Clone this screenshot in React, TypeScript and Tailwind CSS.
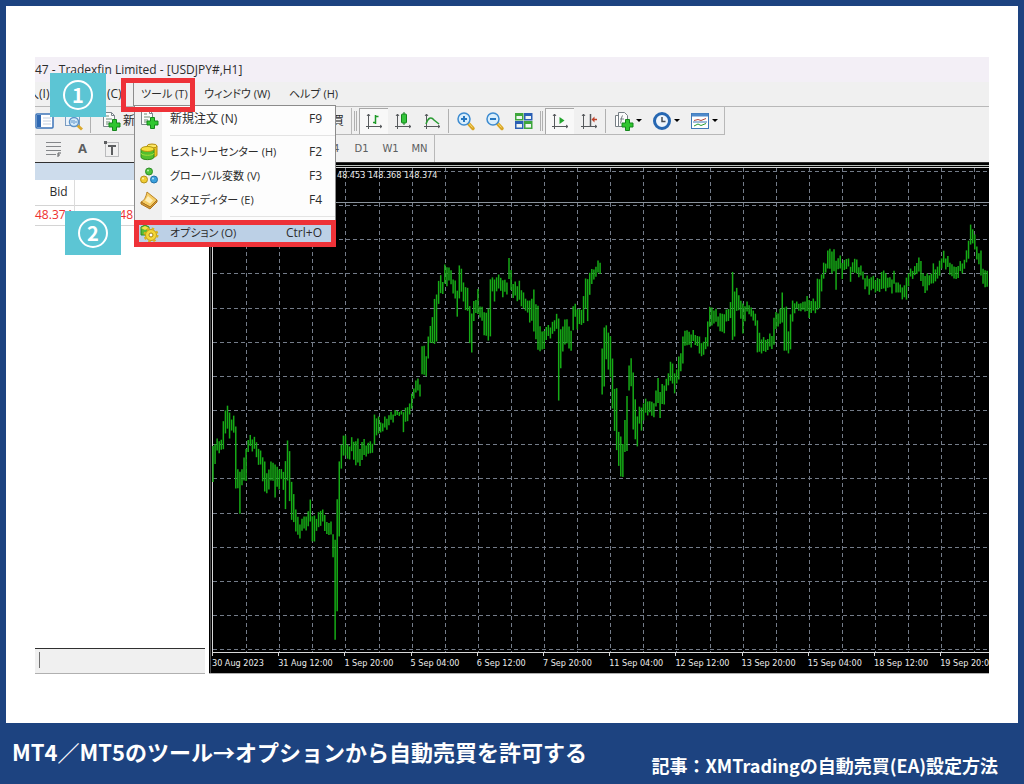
import React from 'react';

// ─────────────────────────────────────────────────────────────
// 1. DATA
// ─────────────────────────────────────────────────────────────

// [x, high, low] for every bar that shapes the curve
const PRICES: number[][] = [
  [213, 446, 482], [215, 443, 463], [218, 440, 452], [222, 440, 450], [224, 422, 450], [226, 409, 432], [228, 407, 430],
  [230, 412, 438], [232, 419, 430], [234, 417, 434], [236, 425, 487], [238, 470, 489], [239, 472, 514], [241, 474, 508],
  [242, 468, 484], [244, 459, 482], [246, 448, 480], [247, 442, 465], [249, 440, 452], [251, 436, 447], [253, 438, 450],
  [256, 442, 457], [258, 448, 464], [260, 452, 466], [262, 456, 480], [264, 462, 492], [266, 474, 494], [268, 468, 488],
  [271, 463, 482], [273, 462, 480], [276, 464, 497], [278, 468, 488], [281, 470, 480], [284, 472, 490], [285, 460, 508],
  [287, 442, 482], [289, 450, 500], [291, 482, 520], [293, 495, 523], [295, 508, 530], [297, 518, 536], [299, 524, 538],
  [301, 522, 534], [303, 518, 530], [306, 515, 529], [309, 512, 527], [311, 500, 522], [312, 515, 540], [313, 520, 553],
  [315, 517, 543], [317, 518, 530], [320, 512, 527], [322, 508, 520], [325, 516, 532], [328, 522, 534], [330, 523, 536],
  [332, 527, 550], [334, 533, 556], [336, 540, 640], [337, 500, 612], [339, 460, 535], [341, 446, 470], [342, 442, 466],
  [344, 435, 455], [347, 446, 460], [349, 445, 458], [352, 438, 452], [354, 442, 460], [357, 440, 464], [359, 448, 465],
  [361, 442, 460], [364, 440, 456], [367, 444, 455], [370, 441, 453], [373, 443, 452], [375, 416, 446], [378, 417, 434],
  [380, 423, 433], [383, 422, 430], [386, 418, 429], [389, 415, 425], [392, 413, 421], [395, 411, 417], [399, 411, 415],
  [402, 412, 416], [404, 411, 431], [407, 408, 422], [409, 402, 413], [412, 395, 410], [414, 388, 398], [417, 380, 392],
  [419, 383, 395], [421, 364, 390], [423, 347, 375], [425, 346, 375], [427, 355, 375], [428, 338, 360], [431, 325, 342],
  [433, 317, 343], [435, 300, 345], [437, 293, 340], [438, 282, 305], [440, 275, 293], [443, 281, 293], [446, 266, 285],
  [448, 268, 281], [451, 271, 285], [454, 278, 292], [456, 282, 300], [458, 290, 316], [460, 265, 298], [462, 270, 293],
  [464, 281, 300], [467, 288, 311], [469, 305, 342], [471, 315, 354], [473, 315, 350], [474, 300, 320], [477, 300, 313],
  [478, 290, 315], [481, 305, 316], [483, 308, 322], [485, 312, 335], [488, 310, 342], [489, 278, 335], [492, 278, 292],
  [494, 280, 302], [498, 276, 290], [500, 277, 290], [503, 280, 297], [506, 281, 293], [508, 272, 285], [510, 259, 280],
  [512, 270, 290], [514, 283, 297], [517, 285, 300], [520, 281, 300], [522, 291, 307], [525, 300, 312], [528, 300, 312],
  [531, 300, 322], [533, 288, 330], [535, 305, 340], [538, 306, 350], [540, 325, 350], [542, 333, 351], [544, 330, 348],
  [547, 327, 340], [549, 326, 337], [552, 323, 335], [554, 320, 331], [557, 313, 328], [559, 320, 402], [560, 328, 367],
  [562, 327, 352], [564, 320, 345], [566, 318, 342], [568, 325, 340], [570, 328, 350], [572, 330, 350], [573, 306, 330],
  [576, 305, 318], [578, 308, 328], [580, 310, 325], [583, 295, 322], [585, 280, 310], [588, 278, 320], [590, 273, 295],
  [592, 270, 285], [595, 268, 278], [598, 260, 272], [599, 259, 270], [601, 262, 273], [603, 350, 396], [604, 326, 385],
  [606, 326, 360], [608, 333, 370], [610, 335, 376], [612, 345, 385], [613, 360, 410], [615, 388, 430], [617, 388, 450],
  [619, 433, 467], [621, 435, 475], [623, 445, 478], [625, 420, 452], [627, 395, 450], [628, 380, 400], [630, 367, 392],
  [632, 357, 385], [633, 373, 430], [635, 400, 440], [637, 415, 445], [639, 408, 425], [642, 407, 430], [644, 403, 420],
  [647, 400, 414], [650, 402, 413], [653, 402, 416], [656, 392, 408], [658, 377, 402], [660, 392, 418], [662, 385, 405],
  [664, 384, 403], [667, 380, 392], [669, 373, 385], [671, 361, 380], [673, 365, 385], [675, 372, 392], [677, 370, 384],
  [679, 357, 380], [681, 352, 370], [683, 338, 365], [685, 330, 345], [687, 330, 345], [690, 333, 346], [693, 331, 342],
  [696, 335, 345], [699, 338, 355], [703, 342, 355], [706, 338, 350], [708, 320, 345], [710, 308, 328], [712, 307, 325],
  [715, 310, 323], [718, 315, 325], [721, 314, 332], [724, 313, 332], [727, 311, 323], [729, 308, 320], [731, 302, 318],
  [733, 273, 341], [734, 290, 335], [736, 289, 312], [738, 295, 310], [741, 300, 318], [743, 305, 335], [745, 305, 320],
  [747, 302, 312], [750, 306, 315], [753, 312, 322], [756, 313, 325], [758, 320, 352], [760, 334, 353], [763, 338, 352],
  [765, 340, 352], [768, 338, 349], [771, 335, 348], [773, 318, 345], [775, 313, 330], [778, 312, 325], [780, 310, 325],
  [782, 292, 322], [784, 307, 350], [786, 308, 352], [789, 330, 352], [791, 315, 350], [793, 301, 322], [795, 302, 312],
  [798, 303, 310], [801, 303, 311], [805, 300, 310], [807, 297, 312], [809, 300, 318], [812, 300, 312], [815, 300, 312],
  [817, 279, 310], [819, 280, 309], [821, 273, 290], [823, 264, 280], [825, 263, 272], [828, 250, 268], [830, 250, 270],
  [833, 250, 272], [834, 250, 272], [836, 261, 290], [838, 257, 268], [841, 257, 270], [843, 262, 278], [845, 260, 270],
  [848, 257, 265], [851, 268, 283], [853, 262, 272], [855, 258, 272], [857, 261, 275], [860, 266, 276], [863, 272, 280],
  [867, 277, 288], [869, 278, 294], [872, 277, 290], [875, 279, 291], [878, 279, 292], [882, 271, 288], [885, 272, 290],
  [888, 278, 288], [892, 278, 292], [895, 272, 285], [897, 282, 292], [900, 286, 294], [903, 286, 298], [906, 278, 300],
  [908, 272, 285], [911, 270, 278], [915, 266, 275], [917, 264, 275], [919, 256, 270], [921, 262, 282], [923, 273, 286],
  [927, 275, 292], [930, 274, 284], [933, 264, 284], [936, 268, 280], [939, 260, 275], [941, 258, 268], [944, 252, 264],
  [947, 257, 268], [950, 263, 275], [954, 268, 280], [957, 266, 278], [961, 262, 272], [964, 261, 270], [967, 250, 262],
  [969, 240, 258], [971, 226, 246], [973, 228, 242], [975, 235, 250], [977, 247, 260], [979, 252, 263], [982, 252, 277],
  [984, 268, 283], [986, 270, 287], [988, 272, 288],
];

const BAR_STEP = 2.07;
const LEFT = 212.5;
const AXIS_Y = 652.5;

const bars = Array.from({ length: 375 }, (_, i) => {
  const x = 213 + i * BAR_STEP;
  const near = PRICES.reduce((a, b) => (Math.abs(b[0] - x) < Math.abs(a[0] - x) ? b : a));
  const wobble = Math.sin(i * 2.4) * 1.5;
  return { x, high: near[1] + wobble, low: near[2] + wobble };
});

const DATES = [
  '30 Aug 2023', '31 Aug 12:00', '1 Sep 20:00', '5 Sep 04:00', '6 Sep 12:00', '7 Sep 20:00',
  '11 Sep 04:00', '12 Sep 12:00', '13 Sep 20:00', '15 Sep 04:00', '18 Sep 12:00', '19 Sep 20:00',
];

// ─────────────────────────────────────────────────────────────
// 2. ICONS
// ─────────────────────────────────────────────────────────────
const Svg = ({ children, size = 20 }: { children: React.ReactNode; size?: number }) => (
  <svg width={size} height={size} viewBox="0 0 20 20" fill="none" aria-hidden="true" className="shrink-0">
    {children}
  </svg>
);

const Plus = () => (
  <path d="M11.5 8.5h4v3.500h3.500v4h-3.500v3.500h-4v-3.500h-3.500v-4h3.500z" fill="#2fc62f" stroke="#15861c" />
);

const NewOrderIcon = ({ size = 20 }: { size?: number }) => (
  <Svg size={size}>
    <path d="M2.500 1.500h8l3 3v11h-11z" fill="#fbfbfb" stroke="#7c858c" />
    <path d="M10.500 1.500v3h3" stroke="#7c858c" />
    <path d="M5 5h3M5 8h6M5 11h4M5 13h3" stroke="#6f8b76" />
    <Plus />
  </Svg>
);

const PanelIcon = () => (
  <Svg>
    <rect x="1" y="3" width="17" height="14" rx="1" fill="#fff" stroke="#3c74b8" strokeWidth="1.500" />
    <rect x="2" y="4" width="4" height="12" fill="#2f69b3" />
    <path d="M8 7h8M8 10h8M8 13h8" stroke="#c3cfdf" />
  </Svg>
);

const TesterIcon = () => (
  <Svg>
    <rect x="1.500" y="2.500" width="14" height="12" fill="#eaf2fa" stroke="#7a9cc2" />
    <path d="M2 4h13" stroke="#7a9cc2" strokeWidth="2" />
    <path d="M13 14l5 4.500" stroke="#dba92e" strokeWidth="3" />
    <circle cx="10" cy="11" r="4.500" fill="#d6ebfa" stroke="#5d93c8" strokeWidth="1.500" />
    <path d="M8 12v-3M10 13v-4M12 12v-2" stroke="#5d93c8" />
  </Svg>
);

const Axes = () => (
  <path d="M4.500 3v15M2 15.500h16M3 5l1.500-2L6 5M16 14l2 1.500-2 1.500" stroke="#56595c" />
);

const BarChartIcon = () => (
  <Svg>
    <Axes />
    <path d="M11.500 4v9M9 11.500h2.500M11.500 5.500h3" stroke="#1d9a27" strokeWidth="1.500" />
  </Svg>
);

const CandleIcon = () => (
  <Svg>
    <Axes />
    <path d="M11 1v13" stroke="#137a1d" />
    <rect x="8.500" y="3" width="5" height="9" rx="1" fill="#35c43b" stroke="#13861d" />
  </Svg>
);

const LineChartIcon = () => (
  <Svg>
    <Axes />
    <path d="M4 13c2-6 5-8 8-4l5 4" stroke="#2a9c33" strokeWidth="1.500" />
  </Svg>
);

const ZoomIcon = ({ plus }: { plus?: boolean }) => (
  <Svg>
    <path d="M12 12l5 5.500" stroke="#d9a524" strokeWidth="3.500" strokeLinecap="round" />
    <path d="M12.500 12l4 4.500" stroke="#f6dc77" />
    <circle cx="8" cy="8" r="6" fill="#d9eefc" stroke="#3d8bd0" strokeWidth="1.500" />
    <path d={plus ? 'M5 8h6M8 5v6' : 'M5 8h6'} stroke="#2676c0" strokeWidth="2" />
  </Svg>
);

const TileIcon = () => (
  <Svg>
    <rect x="1" y="2" width="8.500" height="7.500" fill="#3ea63c" />
    <rect x="10" y="2" width="8.500" height="7.500" fill="#2a5fb4" />
    <rect x="1" y="10" width="8.500" height="8" fill="#2a5fb4" />
    <rect x="10" y="10" width="8.500" height="8" fill="#3ea63c" />
    <path d="M2.500 5h5.500v3H2.500zM11.500 5H17v3h-5.500zM2.500 13h5.500v3.500H2.500zM11.500 13H17v3.500h-5.500z" fill="#eff5f2" />
  </Svg>
);

const ScrollIcon = () => (
  <Svg>
    <Axes />
    <path d="M9.500 6v7l5-3.500z" fill="#24a52e" />
  </Svg>
);

const ShiftIcon = () => (
  <Svg>
    <Axes />
    <path d="M11.500 3v12" stroke="#56595c" strokeWidth="1.500" />
    <path d="M18 8.500h-4" stroke="#bf4028" strokeWidth="1.500" />
    <path d="M12.500 8.500l3-3v6z" fill="#bf4028" />
  </Svg>
);

const IndicatorIcon = () => (
  <Svg>
    <path d="M1.500 4.500h8v11h-8z" fill="#fff" stroke="#777f85" />
    <path d="M4.500 1.500h6l3 3v11h-9z" fill="#fbfbfb" stroke="#777f85" />
    <path d="M9 4.500c-2 0-1.500 8-3 8M6 8h4" stroke="#777f85" />
    <Plus />
  </Svg>
);

const ClockIcon = () => (
  <Svg>
    <circle cx="10" cy="10" r="7.500" fill="#eef5fc" stroke="#2667b2" strokeWidth="3" />
    <path d="M10 6v4.500h3.500" stroke="#474d54" strokeWidth="1.500" />
  </Svg>
);

const TemplateIcon = () => (
  <Svg>
    <rect x="1.500" y="2.500" width="17" height="15" fill="#fff" stroke="#3f78b7" />
    <path d="M2 4h16" stroke="#4f8acb" strokeWidth="3" />
    <path d="M4 9.500l4-1 3 1 5-2" stroke="#b5483b" />
    <path d="M3 11h14" stroke="#3f78b7" />
    <path d="M4 15l4-2 3 1.500 5-2" stroke="#2a9c33" />
  </Svg>
);

const FiboIcon = () => (
  <Svg>
    <path d="M2 3.500h15M2 7.500h15M2 11.500h15M2 15.500h10" stroke="#85878a" />
    <path d="M14 18v-4h3M14 16h2" stroke="#5c5e60" />
  </Svg>
);

const LabelIcon = () => (
  <Svg>
    <rect x="3.500" y="3.500" width="13" height="14" stroke="#85878a" strokeDasharray="1 1" />
    <path d="M6 7h8M10 7v9" stroke="#5c5e60" strokeWidth="2" />
    <path d="M2 2h3v3H2z" fill="#5c5e60" />
  </Svg>
);

const HistoryIcon = () => (
  <Svg>
    <path d="M8 4v9c0 3 10 3 10 0V4" fill="#e9c21c" stroke="#b38b0c" />
    <ellipse cx="13" cy="4" rx="5" ry="2" fill="#fbe765" stroke="#b38b0c" />
    <path d="M2 7v8c0 3.500 13 3.500 13 0V7" fill="#53bf2e" stroke="#2f8a1b" />
    <path d="M2 11c0 3 13 3 13 0" stroke="#a4dd3a" />
    <ellipse cx="8.500" cy="7" rx="6.500" ry="2.500" fill="#f7dc3e" stroke="#b39a12" />
  </Svg>
);

const GlobalsIcon = () => (
  <Svg>
    <circle cx="10" cy="5.500" r="3.500" fill="#4cc23d" stroke="#2e8c28" />
    <circle cx="5" cy="13.500" r="3.500" fill="#f0cc33" stroke="#b3911a" />
    <circle cx="15" cy="13.500" r="3.500" fill="#3aa0dc" stroke="#1f6fa8" />
    <circle cx="9" cy="4.500" r="1" fill="#b9efae" />
    <circle cx="4" cy="12.500" r="1" fill="#fdf1b0" />
    <circle cx="14" cy="12.500" r="1" fill="#b5e0f8" />
  </Svg>
);

const EditorIcon = () => (
  <Svg>
    <path d="M8 2l10 8-7 7-9-5c3-1 5-5 6-10z" fill="#f5cd66" stroke="#b98425" />
    <path d="M2 12v2l9 5 7-7v-2l-7 7z" fill="#d99b34" stroke="#a87420" />
    <path d="M9 6l5 4.500-3 3-5-3z" fill="#fdeeba" />
  </Svg>
);

const OptionsIcon = () => (
  <Svg>
    <path d="M2 4l4-2 4 2v8H2z" fill="#58bd35" stroke="#2f8a1b" />
    <path d="M2 5l4-2 4 2-4 2z" fill="#f5e14a" />
    <circle cx="12" cy="12" r="5.500" fill="#f3d739" stroke="#c29b12" />
    <circle cx="12" cy="12" r="6.500" stroke="#d9b41c" strokeWidth="2" strokeDasharray="2.500 2.600" />
    <circle cx="12" cy="12" r="2" fill="#fff" stroke="#a3810e" />
  </Svg>
);

// ─────────────────────────────────────────────────────────────
// 3. TOOLBARS
// ─────────────────────────────────────────────────────────────
const Tool = ({ label, pressed, children }: { label: string; pressed?: boolean; children: React.ReactNode }) => (
  <button
    aria-label={label}
    className={`flex h-[26px] w-[29px] shrink-0 items-center justify-center ${
      pressed ? 'border-l border-t border-[#a8a8a8] bg-[#f8f8f8]' : ''
    }`}
  >
    {children}
  </button>
);

const DropTool = ({ label, children }: { label: string; children: React.ReactNode }) => (
  <button aria-label={label} className="flex h-[26px] w-[38px] shrink-0 items-center gap-[2px] pl-1">
    {children}
    <span className="border-x-[3px] border-t-[3px] border-x-transparent border-t-black" />
  </button>
);

const Sep = () => <span className="mx-[2px] h-6 w-px shrink-0 bg-[#b0b0b0]" />;

const Grip = () => <span className="mx-[2px] h-5 w-[3px] shrink-0 border-x border-[#b0b0b0]" />;

const MainToolbar = () => (
  <div className="flex h-[29px] items-center overflow-hidden border-t border-[#b8b8b8]">
    <div className="flex h-full items-center border-b border-r border-[#b8b8b8]">
      <div className="flex w-[317px] shrink-0 items-center border-r border-[#b8b8b8] pr-[7px]">
        <button aria-label="気配値表示" className="flex h-[26px] w-6 items-center">
          <PanelIcon />
        </button>
        <Tool label="ストラテジーテスター">
          <TesterIcon />
        </Tool>
        <Sep />
        <button aria-label="新規注文" className="ml-2 flex items-center gap-[2px] text-[12px]">
          <NewOrderIcon />
          新
        </button>
        <button aria-label="自動売買" className="ml-auto text-[12px]">
          買
        </button>
      </div>
      <Grip />
      <Tool label="バーチャート" pressed>
        <BarChartIcon />
      </Tool>
      <Tool label="ローソク足">
        <CandleIcon />
      </Tool>
      <Tool label="ラインチャート">
        <LineChartIcon />
      </Tool>
      <Sep />
      <Tool label="拡大">
        <ZoomIcon plus />
      </Tool>
      <Tool label="縮小">
        <ZoomIcon />
      </Tool>
      <Tool label="整列">
        <TileIcon />
      </Tool>
      <Grip />
      <Tool label="自動スクロール" pressed>
        <ScrollIcon />
      </Tool>
      <Tool label="チャートシフト">
        <ShiftIcon />
      </Tool>
      <Sep />
      <div className="flex pl-[2px]">
        <DropTool label="インディケータ">
          <IndicatorIcon />
        </DropTool>
        <DropTool label="時間足">
          <ClockIcon />
        </DropTool>
        <DropTool label="定型チャート">
          <TemplateIcon />
        </DropTool>
      </div>
    </div>
  </div>
);

const PeriodToolbar = () => (
  <div className="flex h-[27px] items-center text-[#5c5e60]">
    <div className="flex h-full w-[400px] items-center border-r border-[#b8b8b8] pl-1">
      <Tool label="フィボナッチ">
        <FiboIcon />
      </Tool>
      <Tool label="テキスト">
        <span className="text-[13px] font-bold">A</span>
      </Tool>
      <Tool label="テキストラベル">
        <LabelIcon />
      </Tool>
      <div className="ml-auto flex font-['DejaVu_Sans'] text-[10px]">
        <button className="w-[29px] text-center">H4</button>
        <button className="w-[29px] text-center">D1</button>
        <button className="w-[29px] text-center">W1</button>
        <button className="w-[29px] text-center">MN</button>
      </div>
    </div>
  </div>
);

// ─────────────────────────────────────────────────────────────
// 4. TOOL MENU
// ─────────────────────────────────────────────────────────────
type MenuRowProps = { icon: React.ReactNode; label: string; shortcut: string; active?: boolean; kanji?: boolean };

const MenuRow = ({ icon, label, shortcut, active, kanji }: MenuRowProps) => (
  <button className={`flex h-6 w-full items-center pr-[13px] text-[12px] ${active ? 'bg-[#bcd0e6]' : ''}`}>
    <span className={`flex h-full w-[27px] items-center justify-center ${active ? '' : 'bg-[#f0f0f0]'}`}>{icon}</span>
    <span className={`ml-2 ${kanji ? 'text-[12px]' : 'text-[11px]'}`}>{label}</span>
    <span className="ml-auto">{shortcut}</span>
  </button>
);

const MenuLine = () => (
  <div className="flex h-[9px] items-center">
    <span className="h-full w-[27px] bg-[#f0f0f0]" />
    <span className="ml-2 h-px flex-1 bg-[#e4e4e4]" />
  </div>
);

const ToolMenu = () => (
  <div className="absolute left-[99px] top-[48px] w-[202px] border border-[#8c8c8c] bg-[#fdfdfd] py-px">
    <MenuRow icon={<NewOrderIcon />} label="新規注文 (N)" shortcut="F9" kanji />
    <MenuLine />
    <MenuRow icon={<HistoryIcon />} label="ヒストリーセンター (H)" shortcut="F2" />
    <MenuRow icon={<GlobalsIcon />} label="グローバル変数 (V)" shortcut="F3" />
    <MenuRow icon={<EditorIcon />} label="メタエディター (E)" shortcut="F4" />
    <MenuLine />
    <MenuRow icon={<OptionsIcon />} label="オプション (O)" shortcut="Ctrl+O" active />
    <div className="absolute -inset-x-px -bottom-px h-[27px] border-[5px] border-[#ee3238]" />
  </div>
);

const Step = ({ n, className }: { n: number; className: string }) => (
  <div className={`absolute flex h-11 w-14 items-center justify-center bg-[#5cc5d4] ${className}`}>
    <span className="flex h-[30px] w-[30px] items-center justify-center rounded-full border-2 border-white font-['Noto_Sans_CJK_JP'] text-[20px] font-bold leading-none text-white">
      {n}
    </span>
  </div>
);

// ─────────────────────────────────────────────────────────────
// 5. MARKET WATCH & CHART
// ─────────────────────────────────────────────────────────────
const MarketWatch = () => (
  <div className="flex w-[174px] shrink-0 flex-col bg-white">
    <div className="h-[17px] bg-[#cddcec]" />
    <table className="w-full table-fixed border-collapse text-[12px]">
      <thead>
        <tr className="h-[25px] border-b border-[#d4d4d4]">
          <th className="w-[39px] border-r border-[#dcdcdc] pr-[6px] text-right font-normal">Bid</th>
          <th className="w-[62px]" />
          <th />
        </tr>
      </thead>
      <tbody>
        <tr className="h-[20px] border-b border-[#d4d4d4] text-[#ee3030]">
          <td className="border-r border-[#dcdcdc]">48.374</td>
          <td className="pr-[3px] text-right">48</td>
          <td />
        </tr>
      </tbody>
    </table>
    <div className="mr-1 mt-auto h-[26px] border-b border-t border-b-[#b0b0b0] border-t-[#303030] bg-[#f0f0f0] px-1 py-[3px]">
      <div className="h-4 w-px bg-[#707070]" />
    </div>
  </div>
);

const Chart = () => (
  <div className="min-w-0 flex-1 border-b border-[#b0b0b0] bg-black">
    <svg className="block h-[510px] w-full overflow-hidden" role="img" aria-label="USDJPY H1">
      <g transform="translate(-209 -163)">
        <path d="M209 165.500H2000" stroke="#b9c0bb" />
        <path d={`M2000 167.500H${LEFT}V${AXIS_Y}H2000`} fill="none" stroke="#d8d8d8" />
        <path d="M210.500 165V674" stroke="#4a4a4a" />
        <g stroke="#747c89" strokeDasharray="4 3">
          {Array.from({ length: 24 }, (_, i) => {
            const x = Math.round(213 + (i + 1) * 33.1) + 0.5;
            return <path key={i} d={`M${x} 168V652`} />;
          })}
          {Array.from({ length: 15 }, (_, i) => {
            const y = Math.round(171 + i * 34.15) + 0.5;
            return <path key={i} d={`M213 ${y}H2000`} />;
          })}
        </g>
        <path d="M213 202.500H2000" stroke="#8b939c" />
        <g stroke="#16ab16" strokeWidth="1.500">
          {bars.map((b) => (
            <path key={b.x} d={`M${b.x} ${b.high}V${b.low}`} />
          ))}
        </g>
        <g fill="#ececec" className="font-['DejaVu_Sans_Condensed','DejaVu_Sans',sans-serif] text-[9px]">
          <text x="337" y="178">48.453 148.368 148.374</text>
          {DATES.map((d, i) => (
            <text key={d} x={212 + i * 66.2} y="666">
              {d}
            </text>
          ))}
        </g>
        <g stroke="#d8d8d8">
          {DATES.map((d, i) => (
            <path key={d} d={`M${Math.round(212 + i * 66.2) + 0.5} 652V656`} />
          ))}
        </g>
      </g>
    </svg>
  </div>
);

// ─────────────────────────────────────────────────────────────
// 6. PAGE
// ─────────────────────────────────────────────────────────────
export default function App() {
  return (
    <div className="flex min-h-screen flex-col bg-[#1d4380]">
      <main className="mx-[6px] mt-[6px] bg-white px-[29px] pb-[49px] pt-[51px]">
        <div className="relative bg-[#f0f0f0] font-['Open_Sans','Noto_Sans_CJK_JP',sans-serif] text-[#2c2c2c] [font-feature-settings:'palt']">
          <div className="flex h-[25px] items-center bg-[#f3eff6] text-[12px]">47 - Tradexfin Limited - [USDJPY#,H1]</div>

          <nav className="flex h-6 items-center overflow-hidden text-[11px]">
            <button className="-ml-2 w-[68px] whitespace-nowrap text-left text-[12px]">入(I)</button>
            <button className="w-[38px] whitespace-nowrap pl-3 text-left text-[12px]">(C)</button>
            <button className="flex h-full w-[62px] items-center whitespace-nowrap border-l border-t border-[#8c8c8c] pl-[7px]">
              ツール (T)
            </button>
            <button className="w-[94px] whitespace-nowrap pl-[9px] text-left">ウィンドウ (W)</button>
            <button className="whitespace-nowrap">ヘルプ (H)</button>
          </nav>

          <MainToolbar />
          <PeriodToolbar />

          <div className="flex border-t border-[#303030]">
            <MarketWatch />
            <Chart />
          </div>

          <ToolMenu />
          <div className="absolute left-[86px] top-[21px] h-[34px] w-[74px] border-[5px] border-[#ee3238]" />
          <Step n={1} className="left-[15px] top-[16px]" />
          <Step n={2} className="left-[30px] top-[154px]" />
        </div>
      </main>

      <footer className="flex flex-1 items-start justify-between whitespace-nowrap pl-3 pr-[26px] font-['Noto_Sans_CJK_JP',sans-serif] font-bold text-white">
        <h1 className="pt-3 text-[22px] leading-8">MT4／MT5のツール→オプションから自動売買を許可する</h1>
        <p className="pt-7 text-[18px] leading-7">記事：XMTradingの自動売買(EA)設定方法</p>
      </footer>
    </div>
  );
}
